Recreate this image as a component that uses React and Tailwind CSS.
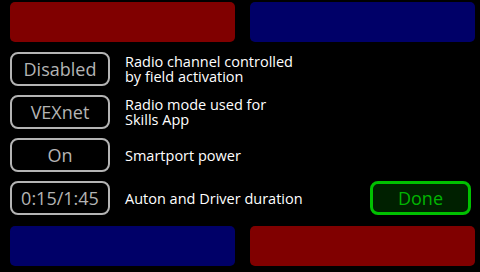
const rows = [
  { value: "Disabled", label: ["Radio channel controlled", "by field activation"] },
  { value: "VEXnet", label: ["Radio mode used for", "Skills App"] },
  { value: "On", label: ["Smartport power"] },
  { value: "0:15/1:45", label: ["Auton and Driver duration"], done: true },
];

export default function App() {
  return (
    <div
      className="w-[480px] h-[272px] bg-black overflow-hidden flex flex-col pt-[2px]"
      style={{ fontFamily: '"Open Sans", "Noto Sans", sans-serif' }}
    >
      <div className="flex gap-[15px] pl-[10px] shrink-0">
        <div className="w-[225px] h-[40px] rounded-[5px] bg-[#800000]" />
        <div className="w-[225px] h-[40px] rounded-[5px] bg-[#000068]" />
      </div>

      <div className="flex flex-col gap-[9px] mt-[10px] px-[10px]">
        {rows.map((row) => (
          <div key={row.value} className="flex items-center h-[34px]">
            <div className="w-[100px] h-[34px] shrink-0 rounded-[8px] border-[2px] border-[#b4b4b4] flex items-center justify-center text-[#b4b4b4] text-[18px]">
              {row.value}
            </div>
            <div className="ml-[15px] text-white text-[14.5px] leading-[15px] flex-1">
              {row.label.map((line) => (
                <div key={line}>{line}</div>
              ))}
            </div>
            {row.done && (
              <div className="w-[101px] h-[34px] mr-[-1px] shrink-0 rounded-[8px] border-[3px] border-[#00c000] bg-[#002000] flex items-center justify-center text-[#00b400] text-[18px]">
                Done
              </div>
            )}
          </div>
        ))}
      </div>

      <div className="flex gap-[15px] pl-[10px] mt-[11px] shrink-0">
        <div className="w-[225px] h-[40px] rounded-[5px] bg-[#000068]" />
        <div className="w-[225px] h-[40px] rounded-[5px] bg-[#800000]" />
      </div>
    </div>
  );
}
